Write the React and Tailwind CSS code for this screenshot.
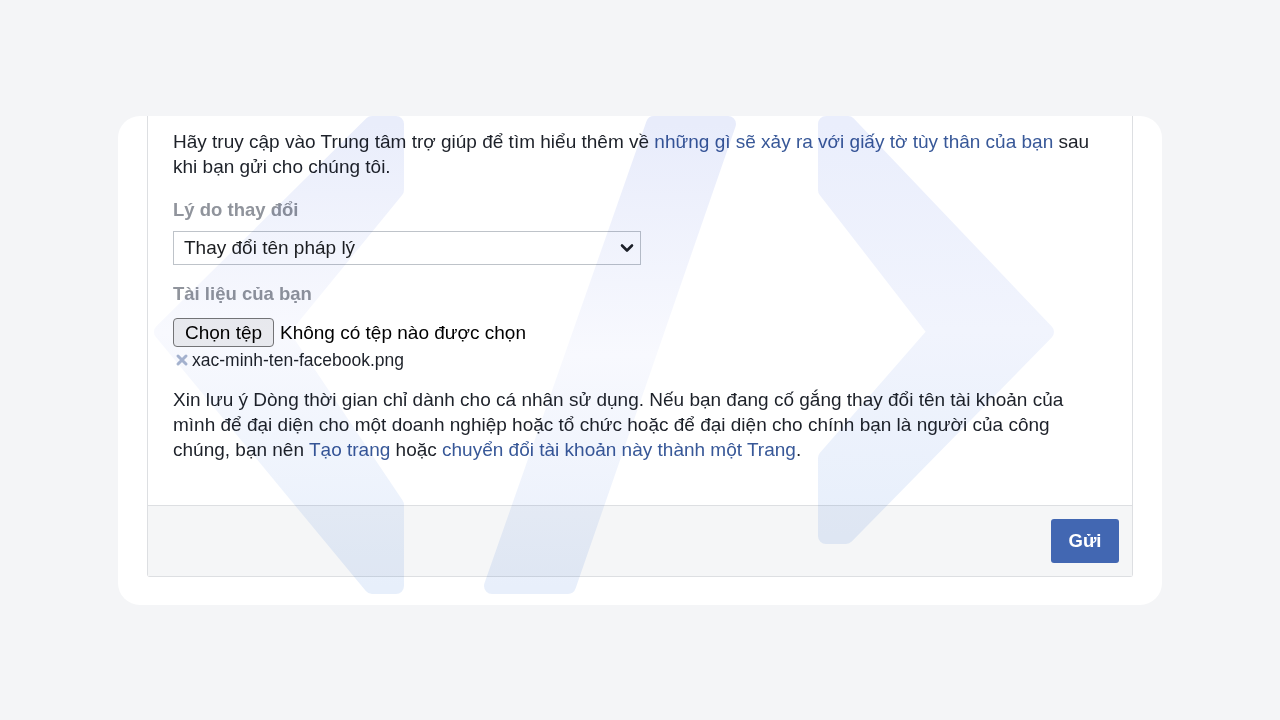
import { useState } from 'react';

function Watermark() {
  return (
    <svg
      className="pointer-events-none absolute inset-0 h-full w-full mix-blend-multiply"
      viewBox="0 0 1280 720"
      fill="none"
    >
      <defs>
        <linearGradient id="wm-left" x1="0" y1="0" x2="0" y2="1">
          <stop offset="0" stopColor="#e9edfb" />
          <stop offset="0.45" stopColor="#f8f9fe" />
          <stop offset="1" stopColor="#e7effb" />
        </linearGradient>
        <linearGradient id="wm-slash" x1="0" y1="0" x2="0" y2="1">
          <stop offset="0" stopColor="#e8ecfb" />
          <stop offset="0.5" stopColor="#f8f9fe" />
          <stop offset="1" stopColor="#e8effb" />
        </linearGradient>
        <linearGradient id="wm-right" x1="0" y1="0" x2="0" y2="1">
          <stop offset="0" stopColor="#eaeefc" />
          <stop offset="0.5" stopColor="#f1f4fd" />
          <stop offset="1" stopColor="#e7effb" />
        </linearGradient>
      </defs>
      <path
        d="M372 124 L396 124 L396 190 L280 332 L396 505 L396 586 L372 586 L162 332 Z"
        fill="url(#wm-left)"
        stroke="url(#wm-left)"
        strokeWidth="16"
        strokeLinejoin="round"
      />
      <path
        d="M654 124 L728 124 L568 586 L492 586 Z"
        fill="url(#wm-slash)"
        stroke="url(#wm-slash)"
        strokeWidth="16"
        strokeLinejoin="round"
      />
      <path
        d="M826 124 L848 124 L1046 332 L846 536 L826 536 L826 458 L936 332 L826 190 Z"
        fill="url(#wm-right)"
        stroke="url(#wm-right)"
        strokeWidth="16"
        strokeLinejoin="round"
      />
    </svg>
  );
}

function ChevronDown() {
  return (
    <svg width="16" height="16" viewBox="0 0 16 16" fill="none">
      <path d="M3 5.5 L8 10.5 L13 5.5" stroke="#1d2129" strokeWidth="2.6" strokeLinecap="round" strokeLinejoin="round" />
    </svg>
  );
}

export default function App() {
  const [reason] = useState('Thay đổi tên pháp lý');

  return (
    <div className="relative flex h-screen w-full items-center justify-center overflow-hidden bg-[#f4f5f7] font-['Liberation_Sans',Arial,sans-serif]">
      <div className="flex h-[489px] w-[1044px] flex-col overflow-hidden rounded-[22px] bg-white px-[29px] pb-[28px]">
        <div className="flex flex-1 flex-col rounded-b-[3px] border-x border-b border-[#dddfe2]">
          <div className="flex-1 px-[25px] pt-[13px] text-[19px] leading-[25px] text-[#1d2129]">
            <p>
              Hãy truy cập vào Trung tâm trợ giúp để tìm hiểu thêm về{' '}
              <a className="text-[#385898]">những gì sẽ xảy ra với giấy tờ tùy thân của bạn</a> sau khi bạn gửi cho
              chúng tôi.
            </p>

            <div className="mt-[18px] text-[18.5px] font-bold text-[#90949c]">Lý do thay đổi</div>
            <div className="mt-[9px] flex h-[34px] w-[468px] items-center justify-between border border-[#bec3c9] bg-white pl-[10px] pr-[5px] text-[#1c1e21]">
              <span>{reason}</span>
              <ChevronDown />
            </div>

            <div className="mt-[16px] text-[18.5px] font-bold text-[#90949c]">Tài liệu của bạn</div>
            <div className="mt-[12px] flex items-center gap-[6px] text-[#000]">
              <button className="h-[29px] w-[101px] rounded-[4px] border border-[#767676] bg-[#efefef] text-[19px] text-black">
                Chọn tệp
              </button>
              <span>Không có tệp nào được chọn</span>
            </div>
            <div className="mt-[1px] flex items-center gap-[3px] text-[17.5px] leading-[24px] text-[#1d2129]">
              <svg width="14" height="14" viewBox="0 0 14 14" className="ml-[2px]">
                <path d="M3 3 L11 11 M11 3 L3 11" stroke="#a9b6cf" strokeWidth="3" strokeLinecap="round" />
              </svg>
              <span>xac-minh-ten-facebook.png</span>
            </div>

            <p className="mt-[15px]">
              Xin lưu ý Dòng thời gian chỉ dành cho cá nhân sử dụng. Nếu bạn đang cố gắng thay đổi tên tài khoản của
              mình để đại diện cho một doanh nghiệp hoặc tổ chức hoặc để đại diện cho chính bạn là người của công
              chúng, bạn nên <a className="text-[#385898]">Tạo trang</a> hoặc{' '}
              <a className="text-[#385898]">chuyển đổi tài khoản này thành một Trang</a>.
            </p>
          </div>

          <div className="flex justify-end border-t border-[#dddfe2] bg-[#f5f6f7] p-[13px]">
            <button className="h-[44px] w-[68px] rounded-[3px] bg-[#4267b2] text-[18.5px] font-bold text-white">
              Gửi
            </button>
          </div>
        </div>
      </div>
      <Watermark />
    </div>
  );
}
